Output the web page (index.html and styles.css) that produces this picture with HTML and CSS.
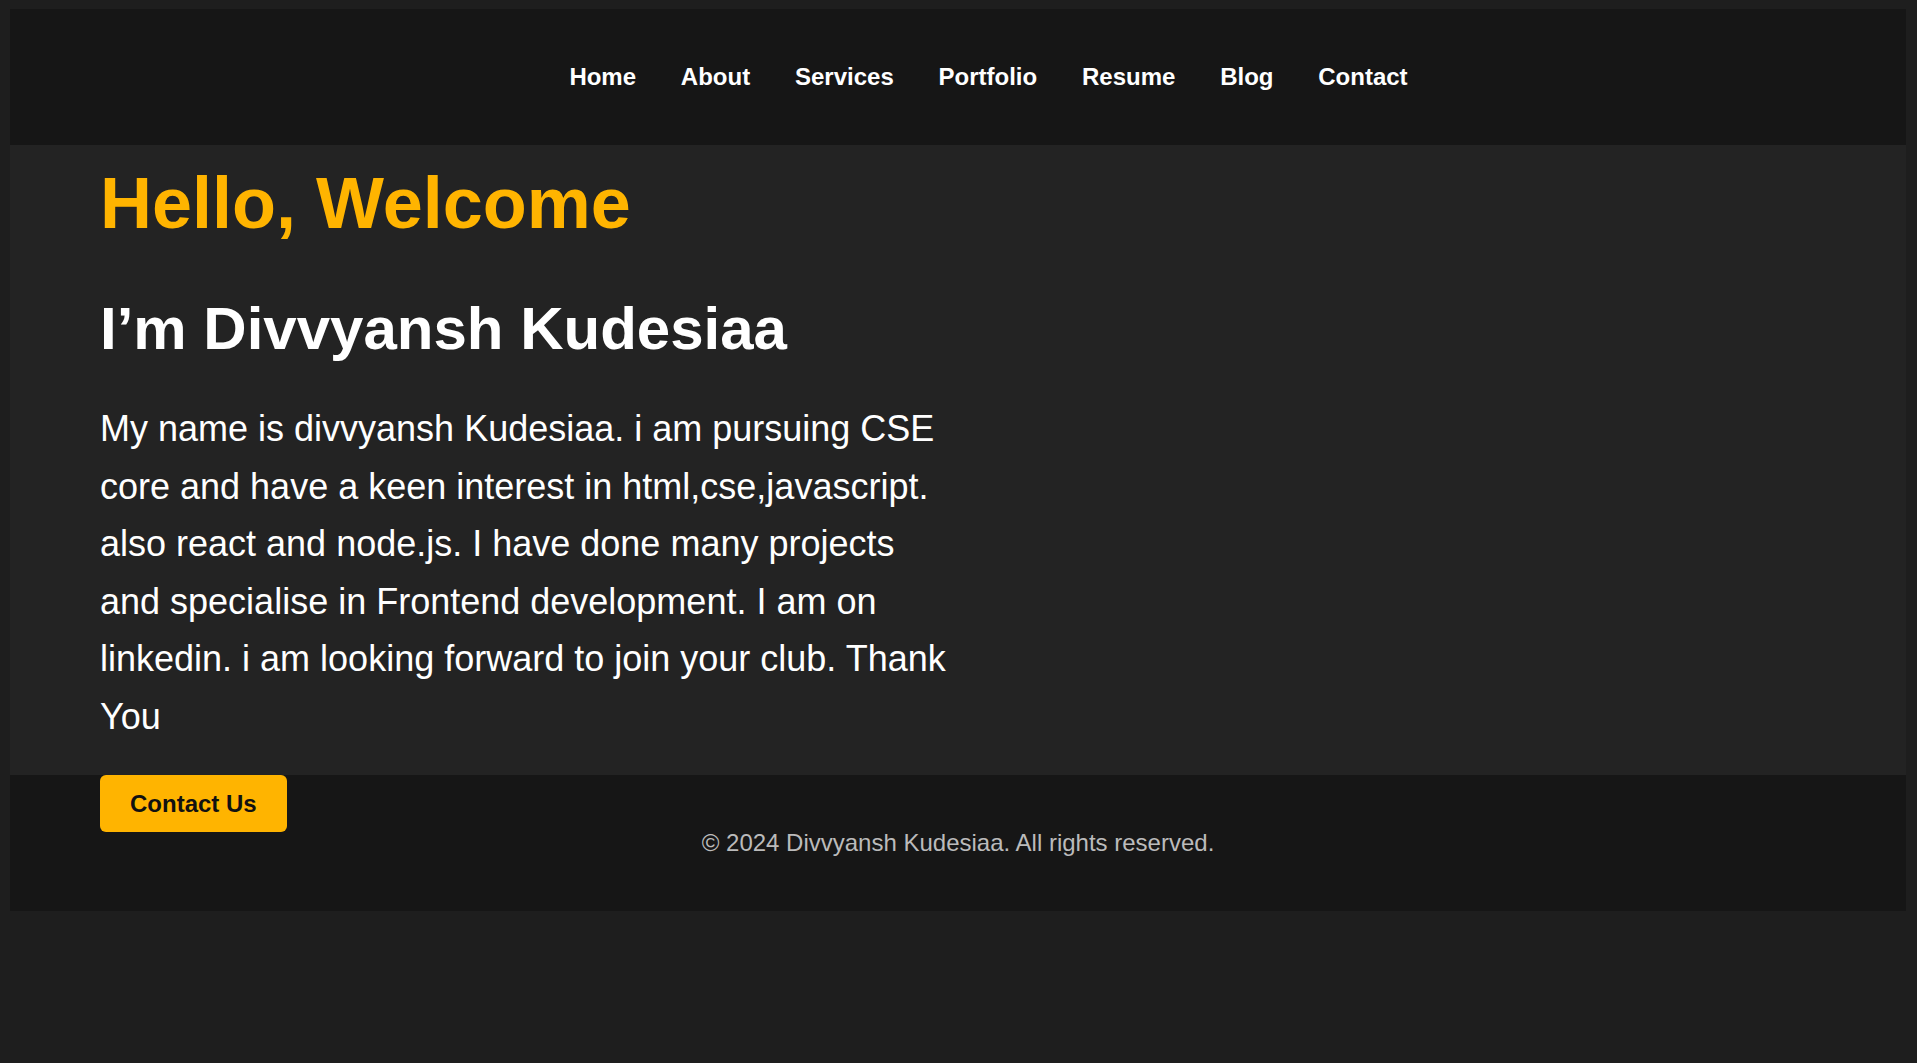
FILE: index.html
```html
<!DOCTYPE html>
<html lang="en">
<head>
<meta charset="utf-8">
<title>Divvyansh Kudesiaa</title>
<link rel="stylesheet" href="styles.css">
</head>
<body>
<header class="site-header">
  <nav class="nav">
    <a class="nav-link" href="#">Home</a>
    <a class="nav-link" href="#">About</a>
    <a class="nav-link" href="#">Services</a>
    <a class="nav-link" href="#">Portfolio</a>
    <a class="nav-link" href="#">Resume</a>
    <a class="nav-link" href="#">Blog</a>
    <a class="nav-link" href="#">Contact</a>
  </nav>
</header>
<section class="hero">
  <h1 class="hero-title">Hello, Welcome</h1>
  <h2 class="hero-name">I’m Divvyansh Kudesiaa</h2>
  <p class="hero-text">My name is divvyansh Kudesiaa. i am pursuing CSE core and have a keen interest in html,cse,javascript. also react and node.js. I have done many projects and specialise in Frontend development. I am on linkedin. i am looking forward to join your club. Thank You</p>
  <a class="btn" href="#">Contact Us</a>
</section>
<footer class="site-footer">
  <p class="copy">© 2024 Divvyansh Kudesiaa. All rights reserved.</p>
</footer>
</body>
</html>
```
FILE: styles.css
```css
html {
  background: #1e1e1e;
}
body {
  margin: 9px 11px 0 10px;
  background: #1e1e1e;
  font-family: "Liberation Sans", Arial, sans-serif;
  color: #fff;
}
.site-header {
  background: #161616;
  padding: 54px 0 54px 61px;
}
.nav {
  display: flex;
  justify-content: center;
  gap: 44.8px;
}
.nav-link {
  color: #fff;
  text-decoration: none;
  font-weight: bold;
  font-size: 24px;
  line-height: 28px;
}
.hero {
  background: #232323;
  height: 613px;
  padding: 17px 0 0 90px;
}
.hero-title {
  margin: 0;
  color: #ffb400;
  font-size: 72px;
  line-height: normal;
  font-weight: bold;
}
.hero-name {
  margin: 50px 0 37px;
  font-size: 60px;
  line-height: normal;
  font-weight: bold;
  color: #fff;
}
.hero-text {
  margin: 0 0 29px;
  width: 852px;
  font-size: 36px;
  line-height: 1.6;
}
.btn {
  display: inline-block;
  background: #ffb400;
  color: #111;
  text-decoration: none;
  font-weight: bold;
  font-size: 24px;
  line-height: 27px;
  padding: 15px 30px;
  border-radius: 6px;
}
.site-footer {
  background: #161616;
  padding: 54px 0;
  text-align: center;
}
.copy {
  margin: 0;
  color: #bbb;
  font-size: 24px;
  line-height: 28px;
}
```
